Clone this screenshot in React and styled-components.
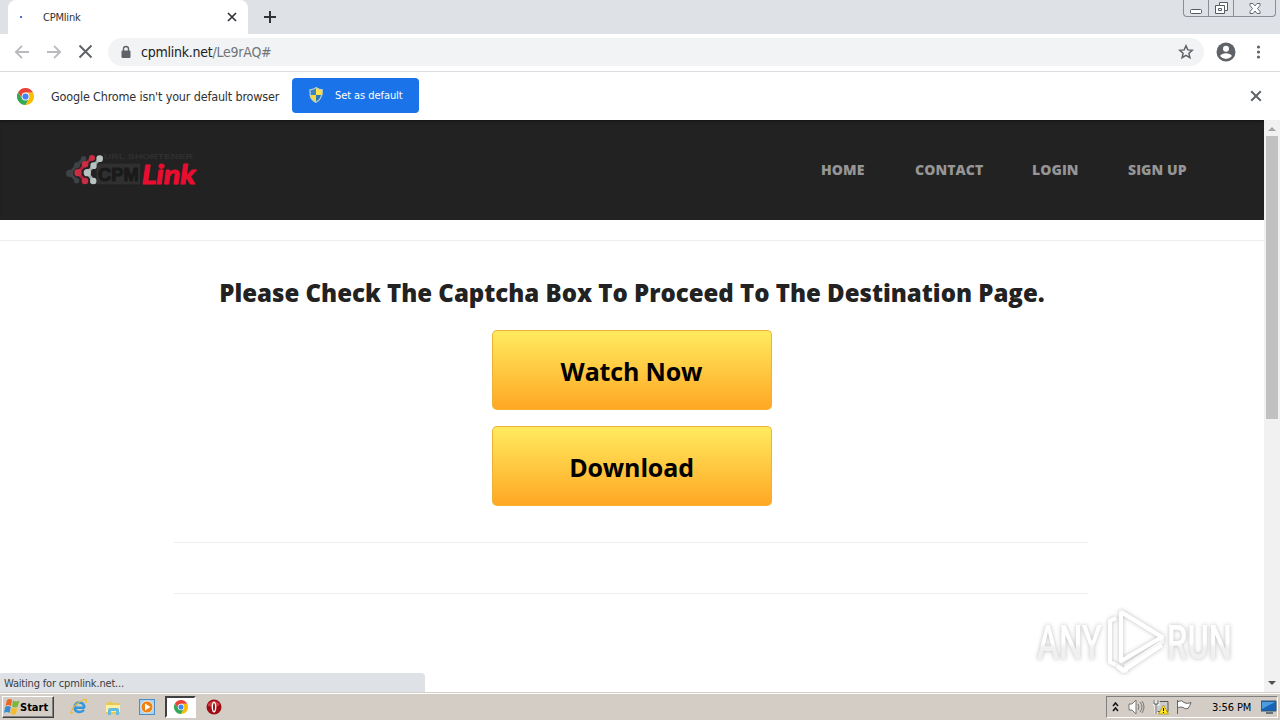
import React from "react";
import styled, { createGlobalStyle } from "styled-components";

const GlobalStyle = createGlobalStyle`
  * {
    box-sizing: border-box;
  }
  body {
    margin: 0;
    overflow: hidden;
    background: #fff;
  }
  svg {
    display: block;
    flex: none;
  }
`;

const Screen = styled.div`
  width: 1280px;
  height: 720px;
  display: flex;
  flex-direction: column;
  font-family: "DejaVu Sans Condensed", "DejaVu Sans", sans-serif;
  color: #303134;
`;

const TabStrip = styled.div`
  height: 34px;
  display: flex;
  padding-left: 8px;
  background: #dee1e6;
`;

const Tab = styled.div`
  width: 240px;
  height: 34px;
  display: flex;
  align-items: center;
  padding: 0 11px 0 12px;
  background: #fff;
  border-radius: 8px 8px 0 0;
`;

const Spinner = styled.span`
  width: 2px;
  height: 2px;
  margin-right: 21px;
  background: #4a6fd0;
`;

const TabTitle = styled.span`
  flex: 1;
  font-size: 11px;
  letter-spacing: -0.2px;
`;

const NewTab = styled.div`
  flex: 1;
  padding: 11px 0 0 16px;
`;

const WindowButtons = styled.div`
  width: 93px;
  height: 17px;
  display: flex;
  margin-right: 4px;
  border: 1px solid #888d96;
  border-top: 0;
  border-radius: 0 0 4px 4px;
`;

const WindowButton = styled.div`
  width: ${(props) => props.$width}px;
  display: flex;
  justify-content: center;
  align-items: center;
  border-right: ${(props) => (props.$last ? "0" : "1px solid #888d96")};
`;

const Toolbar = styled.div`
  height: 38px;
  display: flex;
  align-items: center;
  padding: 0 14px 1px;
  background: #fff;
  border-bottom: 1px solid #dadce0;
`;

const NavIcons = styled.div`
  width: 94px;
  display: flex;
  gap: 16px;
`;

const AddressBar = styled.div`
  width: 1096px;
  height: 28px;
  display: flex;
  align-items: center;
  padding: 0 10px 0 12px;
  border-radius: 14px;
  background: #f1f3f4;
`;

const Url = styled.span`
  flex: 1;
  margin-left: 9px;
  font-size: 14px;
  letter-spacing: -0.24px;
  color: #202124;
  span {
    color: #70757a;
  }
`;

const ToolbarRight = styled.div`
  display: flex;
  align-items: center;
  gap: 12px;
  margin-left: 12px;
`;

const InfoBar = styled.div`
  height: 48px;
  display: flex;
  align-items: center;
  padding: 0 18px 0 17px;
  background: #fff;
`;

const InfoText = styled.span`
  width: 241px;
  margin-left: 17px;
  font-size: 12.5px;
  letter-spacing: -0.17px;
  white-space: nowrap;
`;

const DefaultButton = styled.div`
  width: 127px;
  height: 35px;
  display: flex;
  align-items: center;
  gap: 12px;
  margin: 0 auto 2px 0;
  padding-left: 17px;
  border-radius: 4px;
  background: #1a73e8;
  color: #fff;
  font-size: 11px;
  letter-spacing: -0.07px;
`;

const Viewport = styled.div`
  position: relative;
  height: 572px;
  display: flex;
`;

const Page = styled.div`
  width: 1264px;
  font-family: "Open Sans", sans-serif;
`;

const SiteHeader = styled.div`
  height: 100px;
  display: flex;
  justify-content: space-between;
  align-items: center;
  padding: 0 76px 0 64px;
  background: #222;
  box-shadow: inset 0 3px 3px -2px #111;
`;

const Menu = styled.div`
  display: flex;
  gap: 50px;
`;

const MenuItem = styled.span`
  width: ${(props) => props.$width}px;
  color: #959595;
  font-size: 14px;
  font-weight: 800;
  white-space: nowrap;
  line-height: 20px;
  letter-spacing: 0.08px;
`;

const Divider = styled.div`
  width: ${(props) => props.$width || "100%"};
  height: 1px;
  margin: ${(props) => props.$margin};
  background: #eee;
`;

const Title = styled.div`
  height: 40px;
  color: #222;
  font-size: 24px;
  font-weight: 800;
  line-height: 41px;
  text-align: center;
`;

const YellowButton = styled.div`
  width: 280px;
  height: 80px;
  margin: ${(props) => props.$top}px auto 0;
  padding-right: 1px;
  border: 1px solid #eeb235;
  border-bottom-color: #ffb52c;
  border-radius: 5px;
  background: linear-gradient(#ffeb5f, #ffa724);
  color: #000;
  font-size: 25px;
  font-weight: 700;
  line-height: 80px;
  letter-spacing: -0.15px;
  text-align: center;
`;

const Scrollbar = styled.div`
  width: 16px;
  display: flex;
  flex-direction: column;
  align-items: center;
  padding: 6px 0 6px;
  background: #f1f1f1;
`;

const Thumb = styled.div`
  width: 12px;
  height: 283px;
  margin-top: 5px;
  margin-bottom: auto;
  background: #c1c1c1;
`;

const Watermark = styled.div`
  position: absolute;
  left: 1032px;
  top: 484px;
  filter: drop-shadow(0 0 2px rgba(0, 0, 0, 0.26));
`;

const StatusBubble = styled.div`
  position: absolute;
  left: 0;
  bottom: 0;
  width: 425px;
  height: 19px;
  padding-left: 4px;
  border-radius: 0 4px 0 0;
  background: #dee1e6;
  color: #3c4043;
  font-size: 11px;
  line-height: 21px;
  letter-spacing: -0.18px;
`;

const Taskbar = styled.div`
  height: 28px;
  display: flex;
  align-items: center;
  padding-top: 1px;
  border-top: 1px solid #d4d0c8;
  box-shadow: inset 0 1px #fff;
  background: #d4cdc5;
`;

const StartButton = styled.div`
  width: 52px;
  height: 22px;
  display: flex;
  align-items: center;
  margin-left: 2px;
  padding-left: 1px;
  border: 1px solid;
  border-color: #fff #404040 #404040 #fff;
  box-shadow: inset -1px -1px #808080;
  color: #000;
  font-size: 11px;
  font-weight: 700;
`;

const QuickLaunch = styled.div`
  flex: 1;
  display: flex;
  align-items: center;
  padding-left: 15px;
`;

const TaskItem = styled.div`
  width: ${(props) => props.$width || 34}px;
  height: 22px;
  display: flex;
  align-items: center;
  justify-content: center;
  border: ${(props) => (props.$active ? "2px solid" : "0")};
  border-color: #404040 #fff #fff #404040;
  background: ${(props) => (props.$active ? "#fff" : "none")};
`;

const Tray = styled.div`
  width: 172px;
  height: 22px;
  display: flex;
  align-items: center;
  margin-right: 2px;
  padding-left: 5px;
  border: 1px solid;
  border-color: #808080 #fff #fff #808080;
  color: #000;
  font-size: 11px;
`;

const Clock = styled.span`
  width: 51px;
  margin-left: 12px;
  letter-spacing: -0.1px;
  white-space: nowrap;
`;

const Cross = ({ size, color, width = 2 }) => (
  <svg width={size} height={size} viewBox="0 0 10 10">
    <path d="M1 1l8 8M9 1l-8 8" stroke={color} strokeWidth={width} />
  </svg>
);

const Arrow = ({ flip }) => (
  <svg width="16" height="16" viewBox="0 0 16 16">
    <path
      d="M15 8H2M8 1.8L1.8 8 8 14.2"
      transform={flip ? "translate(16 0) scale(-1 1)" : undefined}
      fill="none"
      stroke="#b8babd"
      strokeWidth="1.8"
    />
  </svg>
);

const ChromeIcon = ({ size }) => (
  <svg width={size} height={size} viewBox="0 0 48 48">
    <path d="M24 13H45.3A24 24 0 0 1 24 48L33.5 29.5z" fill="#fbbc04" />
    <path d="M3.2 12A24 24 0 0 0 24 48L33.5 29.5 14.5 29.5z" fill="#34a853" />
    <path d="M3.2 12A24 24 0 0 1 45.3 13H24L14.5 29.5z" fill="#ea4335" />
    <circle cx="24" cy="24" r="11" fill="#fff" />
    <circle cx="24" cy="24" r="8.7" fill="#4285f4" />
  </svg>
);

const Shield = () => (
  <svg width="14" height="16" viewBox="0 0 14 16">
    <path d="M7 0Q4 2.3 .5 2.2L.5 8H7z" fill="#3985c6" />
    <path d="M7 0Q10 2.3 13.5 2.2V8H7z" fill="#ffe14a" />
    <path d="M.5 8H7v8Q1.5 13.5.5 8z" fill="#ffd833" />
    <path d="M13.5 8H7v8q5.5-2.5 6.5-8z" fill="#2d78bc" />
    <path d="M7 .8Q4 2.8 1 2.8C.6 9 2.4 13 7 15.3c4.6-2.3 6.4-6.3 6-12.5Q10 2.8 7 .8z" fill="none" stroke="#b9cfd0" strokeWidth="1.2" />
  </svg>
);

const SiteLogo = () => (
  <svg width="138" height="40" viewBox="0 0 414 120">
    <g strokeLinecap="round" strokeWidth="9" fill="none">
      <path d="M17 70L39 46 59 26M17 70l21 22" stroke="#3e4347" />
      <path d="M42 68L63 43 84 24M42 68l21 25" stroke="#a82439" />
      <path d="M70 68L89 47 107 26M70 68l18 25" stroke="#9da9a8" />
    </g>
    <g fill="#3e4347">
      <circle cx="17" cy="70" r="11" />
      <circle cx="39" cy="46" r="9" />
      <circle cx="59" cy="26" r="8" />
      <circle cx="38" cy="92" r="8" />
    </g>
    <g fill="#c82d44">
      <circle cx="42" cy="68" r="11" />
      <circle cx="63" cy="43" r="10" />
      <circle cx="84" cy="24" r="9" />
      <circle cx="63" cy="93" r="10" />
    </g>
    <g fill="#b8c4c2">
      <circle cx="70" cy="68" r="11" />
      <circle cx="89" cy="47" r="10" />
      <circle cx="107" cy="26" r="10" />
      <circle cx="88" cy="93" r="10" />
    </g>
    <rect x="98" y="41" width="130" height="62" fill="#303030" />
    <text x="119" y="26" textLength="268" lengthAdjust="spacingAndGlyphs" fill="#303030" fontFamily="Liberation Sans" fontWeight="700" fontSize="19">
      URL SHORTENER
    </text>
    <text x="102" y="92" textLength="122" lengthAdjust="spacingAndGlyphs" fill="#1a1a1a" stroke="#1a1a1a" strokeWidth="3" fontFamily="Liberation Sans" fontWeight="700" fontSize="57">
      CPM
    </text>
    <text x="233" y="102" textLength="162" lengthAdjust="spacingAndGlyphs" fill="#e90d30" stroke="#e90d30" strokeWidth="3" strokeLinejoin="round" fontFamily="Lato" fontStyle="italic" fontWeight="700" fontSize="78">
      Link
    </text>
  </svg>
);

const AnyRun = () => (
  <svg width="216" height="76" viewBox="0 0 216 76">
    <defs>
      <linearGradient id="fade" x1="0" y1="0" x2="0" y2="1">
        <stop offset="0.5" stopColor="#fff" />
        <stop offset="0.6" stopColor="#f0f0f0" />
      </linearGradient>
    </defs>
    <g fill="url(#fade)" fontFamily="Roboto" fontWeight="500" fontSize="49">
      <text x="5" y="55" textLength="65" lengthAdjust="spacingAndGlyphs">ANY</text>
      <text x="135" y="55" textLength="65" lengthAdjust="spacingAndGlyphs">RUN</text>
    </g>
    <g fill="none" stroke="#fff" strokeWidth="4" strokeLinejoin="round">
      <path d="M84 14l-6 3v41l6 3" />
      <path d="M89 50V8l41 25v5L94 62v5l-10-6" stroke="#f6f6f6" />
      <path d="M89 8l41 25-41 24V8M85 62l6 5 39-26" />
    </g>
  </svg>
);

const WindowsFlag = () => (
  <svg width="16" height="16" viewBox="0 0 16 16">
    <path d="M3 1q3-2 5 0L7 7Q4 5 1.5 7z" fill="#ed6426" />
    <path d="M9 1.5q3 2 6.5 0L13.5 8Q11 9 8 7.5z" fill="#79b840" />
    <path d="M1.2 8Q4 6 6.8 8l-1.2 6Q3 12 0 14z" fill="#398ccf" />
    <path d="M7.8 8.5q3 1.5 5.5.5L12 15q-3 1-5.5-.5z" fill="#f5bd25" />
  </svg>
);

const menu = [
  { label: "HOME", width: 44 },
  { label: "CONTACT", width: 67 },
  { label: "LOGIN", width: 46 },
  { label: "SIGN UP", width: 60 },
];

const BrowserTop = () => (
  <>
    <TabStrip>
      <Tab>
        <Spinner />
        <TabTitle>CPMlink</TabTitle>
        <Cross size={10} color="#303438" width={1.7} />
      </Tab>
      <NewTab>
        <svg width="12" height="12" viewBox="0 0 12 12">
          <path d="M6 0v12M0 6h12" stroke="#303438" strokeWidth="2" />
        </svg>
      </NewTab>
      <WindowButtons>
        <WindowButton $width={25}>
          <svg width="12" height="14" viewBox="0 0 12 14">
            <rect x=".5" y="8.5" width="11" height="4" rx="1" fill="#fff" stroke="#555b65" />
          </svg>
        </WindowButton>
        <WindowButton $width={25}>
          <svg width="13" height="14" viewBox="0 0 13 14">
            <path d="M4.5 1.5h8v8h-3v3h-9v-8h4z" fill="#fff" stroke="#555b65" />
            <path d="M4.5 4.5h5v5M3.5 7.5h3v2h-3z" fill="none" stroke="#555b65" />
          </svg>
        </WindowButton>
        <WindowButton $width={41} $last>
          <svg width="12" height="11" viewBox="0 0 12 11">
            <path d="M1 .5h3l2 2.4L8 .5h3v2L8.5 5.5 11 8.5v2H8L6 8l-2 2.5H1v-2l2.5-3L1 2.5z" fill="#fff" stroke="#626873" />
          </svg>
        </WindowButton>
      </WindowButtons>
    </TabStrip>
    <Toolbar>
      <NavIcons>
        <Arrow />
        <Arrow flip />
        <Cross size={15} color="#5f6368" width={1.3} />
      </NavIcons>
      <AddressBar>
        <svg width="12" height="14" viewBox="0 0 12 14">
          <path d="M3.5 6V4a2.5 2.5 0 0 1 5 0v2" fill="none" stroke="#5f6368" strokeWidth="1.4" />
          <rect x="1.5" y="5.5" width="9" height="7.5" rx="1" fill="#5f6368" />
        </svg>
        <Url>
          cpmlink.net<span>/Le9rAQ#</span>
        </Url>
        <svg width="16" height="16" viewBox="0 0 16 16">
          <path d="M8 1.8l1.8 4.1 4.5.4-3.4 3 1 4.4L8 11.4l-3.9 2.3 1-4.4-3.4-3 4.5-.4z" fill="none" stroke="#5f6368" strokeWidth="1.5" />
        </svg>
      </AddressBar>
      <ToolbarRight>
        <svg width="20" height="20" viewBox="0 0 20 20">
          <circle cx="10" cy="10" r="9.5" fill="#5f6368" />
          <circle cx="10" cy="6.7" r="3" fill="#fff" />
          <path d="M4 14q2-2.8 6-2.8t6 2.8Q13.5 17 10 17t-6-3z" fill="#fff" />
        </svg>
        <svg width="16" height="16" viewBox="0 0 16 16" fill="#5f6368">
          <circle cx="10.5" cy="3" r="1.6" />
          <circle cx="10.5" cy="8" r="1.6" />
          <circle cx="10.5" cy="13" r="1.6" />
        </svg>
      </ToolbarRight>
    </Toolbar>
    <InfoBar>
      <ChromeIcon size={17} />
      <InfoText>Google Chrome isn't your default browser</InfoText>
      <DefaultButton>
        <Shield />
        Set as default
      </DefaultButton>
      <Cross size={12} color="#5f6368" width={1.6} />
    </InfoBar>
  </>
);

const SystemTaskbar = () => (
  <Taskbar>
    <StartButton>
      <WindowsFlag />
      Start
    </StartButton>
    <QuickLaunch>
      <TaskItem $width={20}>
        <svg width="18" height="18" viewBox="0 0 18 18">
          <path d="M14.7 9.8H4.5Q5 13.5 9 14q3 .2 5-2M4.5 9Q5.3 4.5 9.5 4.5T14.5 9.8" fill="none" stroke="#3097dc" strokeWidth="2.6" />
          <path d="M3 14.5Q-1 17 2.5 11 6 5 13 2q5-2 2.8 3" fill="none" stroke="#efbc35" strokeWidth="1.3" />
        </svg>
      </TaskItem>
      <TaskItem $width={48}>
        <svg width="17" height="17" viewBox="0 0 17 17">
          <path d="M1 4l6-2 1 2h7v11H1z" fill="#e8c958" />
          <path d="M1 6h14v7H1z" fill="#fff0a1" />
          <path d="M3 16v-5q0-2 2-2h7q2 0 2 2v5h-3v-4H6v4z" fill="#66bbe0" />
        </svg>
      </TaskItem>
      <TaskItem $width={20}>
        <svg width="16" height="16" viewBox="0 0 16 16">
          <rect x=".5" y=".5" width="15" height="15" fill="#a8d3f4" stroke="#4e8cc1" />
          <circle cx="8" cy="8" r="6" fill="#f08212" stroke="#fff" strokeWidth=".7" />
          <path d="M6 4.5v7L11.5 8z" fill="#fff" />
        </svg>
      </TaskItem>
      <TaskItem $width={8} />
      <TaskItem $width={31} $active>
        <ChromeIcon size={14} />
      </TaskItem>
      <TaskItem $width={36}>
        <svg width="16" height="16" viewBox="0 0 16 16">
          <circle cx="8" cy="8" r="7.5" fill="#9d0d14" />
          <path d="M2 5q6-6 12 0-2 4-12 2z" fill="#cf3b3e" />
          <ellipse cx="8" cy="8" rx="2.4" ry="5.5" fill="#fff" />
          <ellipse cx="8" cy="8" rx="1" ry="4" fill="#981015" />
        </svg>
      </TaskItem>
    </QuickLaunch>
    <Tray>
      <svg width="7" height="10" viewBox="0 0 7 10">
        <path d="M1 4l2.5-3L6 4M1 9l2.5-3L6 9" fill="none" stroke="#111" strokeWidth="1.5" />
      </svg>
      <TaskItem $width={36}>
        <svg width="17" height="16" viewBox="0 0 17 16">
          <path d="M1 5h3l4-4v14l-4-4H1z" fill="#fff" stroke="#777" />
          <path d="M10 5q2 3 0 6M12 3q4 5 0 10M14 2q4 6 0 12" fill="none" stroke="#777" />
        </svg>
      </TaskItem>
      <TaskItem $width={14}>
        <svg width="16" height="16" viewBox="0 0 16 16">
          <path d="M4 2.5h11v10H4z" fill="#ccc" stroke="#555" />
          <path d="M1 1v4h4V1M3 5v10" fill="none" stroke="#fff" strokeWidth="3" />
          <path d="M1 1v4h4V1M3 5v10" fill="none" stroke="#555" />
          <path d="M10.5 6L15.5 15h-10z" fill="#ffe629" stroke="#a98a00" strokeWidth=".7" />
          <path d="M10.5 9v3m0 1v1" stroke="#111" />
        </svg>
      </TaskItem>
      <TaskItem $width={34}>
        <svg width="16" height="16" viewBox="0 0 16 16">
          <path d="M1.5 1v14M2 2.5q4-2 6 1 3 2 7 0-1 3-3 6-3 1-5-1-2-1-5 0" fill="#fff" stroke="#666" />
        </svg>
      </TaskItem>
      <Clock>3:56 PM</Clock>
      <svg width="16" height="14" viewBox="0 0 16 14">
        <path d="M0 1h15v10H0z" fill="#1864b6" stroke="#315676" />
        <path d="M1 2h13L1 9z" fill="#4e9ce0" />
        <path d="M5 13h7" stroke="#68727a" strokeWidth="2" />
      </svg>
    </Tray>
  </Taskbar>
);

const App = () => (
  <Screen>
    <GlobalStyle />
    <BrowserTop />
    <Viewport>
      <Page>
        <SiteHeader>
          <SiteLogo />
          <Menu>
            {menu.map((item) => (
              <MenuItem key={item.label} $width={item.width}>
                {item.label}
              </MenuItem>
            ))}
          </Menu>
        </SiteHeader>
        <Divider $margin="20px 0 31px" />
        <Title>Please Check The Captcha Box To Proceed To The Destination Page.</Title>
        <YellowButton $top={18}>Watch Now</YellowButton>
        <YellowButton $top={16}>Download</YellowButton>
        <Divider $width="914px" $margin="36px 0 50px 174px" />
        <Divider $width="914px" $margin="0 0 0 174px" />
      </Page>
      <Scrollbar>
        <svg width="8" height="5" viewBox="0 0 8 5">
          <path d="M0 5l4-4 4 4z" fill="#a3a3a3" />
        </svg>
        <Thumb />
        <svg width="8" height="5" viewBox="0 0 8 5">
          <path d="M0 0h8L4 4z" fill="#505050" />
        </svg>
      </Scrollbar>
      <Watermark>
        <AnyRun />
      </Watermark>
      <StatusBubble>Waiting for cpmlink.net...</StatusBubble>
    </Viewport>
    <SystemTaskbar />
  </Screen>
);

export default App;
